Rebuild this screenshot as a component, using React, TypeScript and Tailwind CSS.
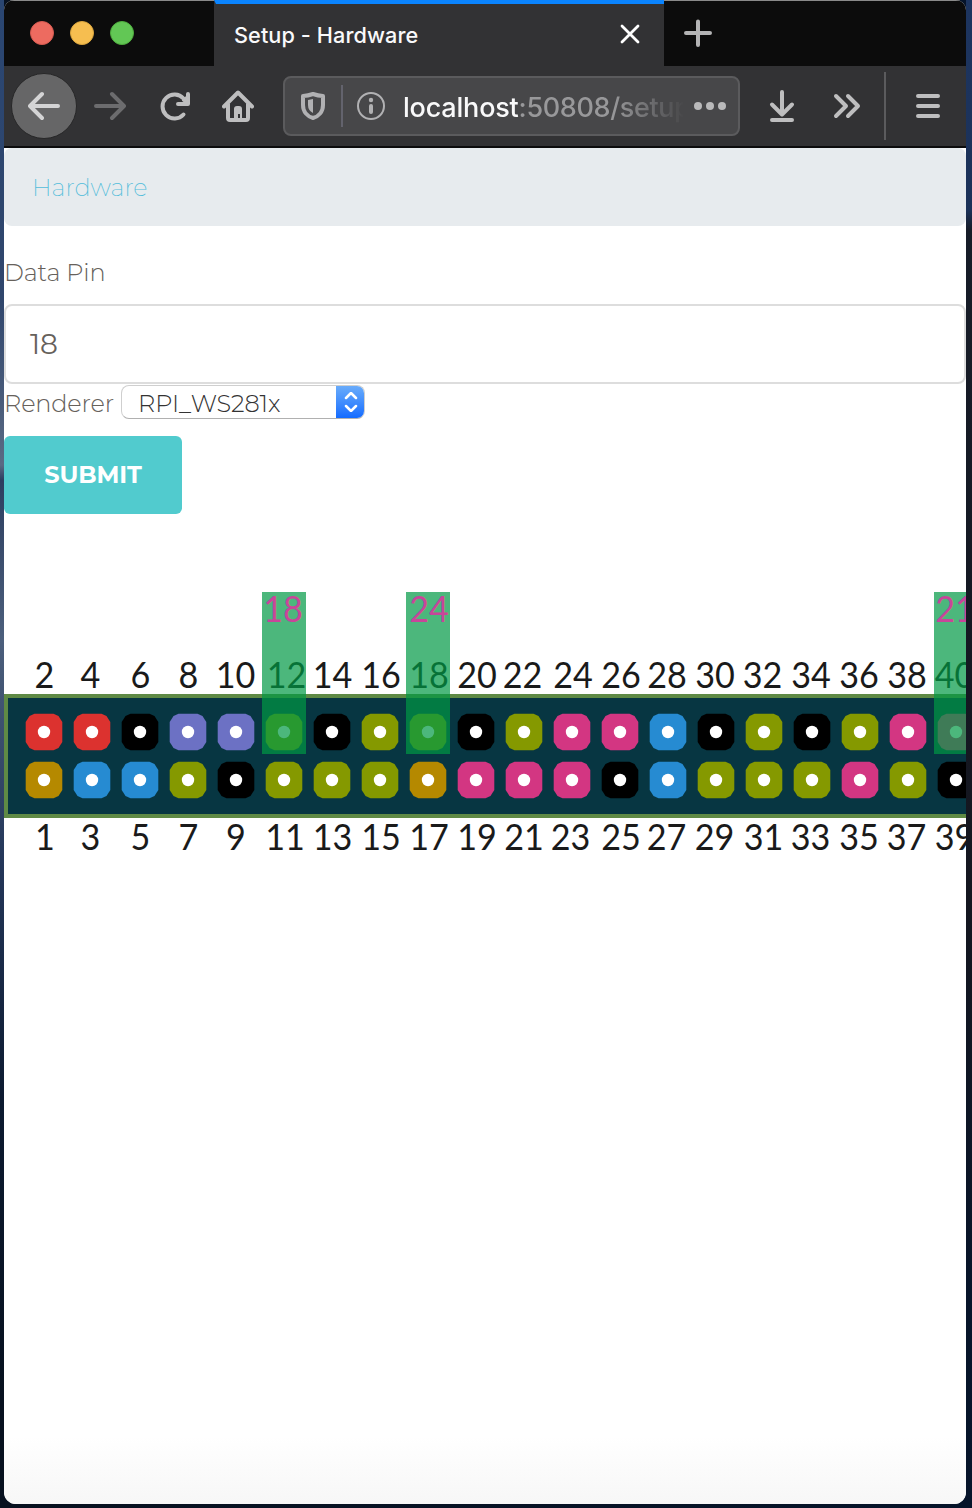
import React from 'react';

type Tone = 'red' | 'gold' | 'blue' | 'olive' | 'black' | 'violet' | 'pink';

const fills: Record<Tone, string> = {
  red: '#dc322f',
  gold: '#b58900',
  blue: '#268bd2',
  olive: '#859900',
  black: '#000000',
  violet: '#6c71c4',
  pink: '#d33682',
};

const top: Tone[] = ['red', 'red', 'black', 'violet', 'violet', 'olive', 'black', 'olive', 'olive', 'black', 'olive', 'pink', 'pink', 'blue', 'black', 'olive', 'black', 'olive', 'pink', 'pink'];
const bottom: Tone[] = ['gold', 'blue', 'blue', 'olive', 'black', 'olive', 'olive', 'olive', 'gold', 'pink', 'pink', 'pink', 'black', 'blue', 'olive', 'olive', 'olive', 'pink', 'olive', 'black'];

const topX = [40.5, 86.5, 136.5, 184.5, 231.5, 282.5, 328.5, 377, 425, 473, 518.5, 569, 617, 663, 711, 758.5, 807, 855, 903, 950.5];
const bottomX = [41, 86.5, 136.5, 184.5, 232, 281, 328.5, 377, 425, 473, 520, 566.5, 617, 662.5, 710.5, 759.5, 806.5, 855, 902.5, 950.5];

const highlights = [
  { x: 258, label: '18', cx: 279 },
  { x: 402, label: '24', cx: 425 },
  { x: 930, label: '21', cx: 951 },
];

function PinNumber({ x, y, value, fill = '#1a1a1a' }: { x: number; y: number; value: string; fill?: string }) {
  const length = value.length * 19.8;
  return (
    <text x={x - length / 2} y={y} fill={fill} fontSize="36.5" textLength={length} lengthAdjust="spacingAndGlyphs">
      {value}
    </text>
  );
}

function Pin({ cx, cy, tone }: { cx: number; cy: number; tone: Tone }) {
  return (
    <g transform={`translate(${cx} ${cy})`}>
      <path d="M-9.500-18.300H9.500L14.500-16 18.300-10V10L14.500 16 9.500 18.300H-9.500L-14.500 16-18.300 10V-10L-14.500-16Z" fill={fills[tone]} />
      <circle r="6.2" fill="#fff" />
    </g>
  );
}

function PinDiagram() {
  return (
    <svg className="mt-[78px] block h-[270px] w-[962px] shrink-0" viewBox="0 0 962 270" fontFamily="Lato, sans-serif" role="img" aria-label="GPIO pin header">
      <rect x="2" y="104" width="1000" height="120" fill="#073642" stroke="#5f8a45" strokeWidth="4" />
      {top.map((tone, i) => (
        <Pin key={i} cx={40 + i * 48} cy={140} tone={tone} />
      ))}
      {bottom.map((tone, i) => (
        <Pin key={i} cx={40 + i * 48} cy={188} tone={tone} />
      ))}
      {topX.map((x, i) => (
        <PinNumber key={i} x={x} y={96} value={String(i * 2 + 2)} />
      ))}
      {bottomX.map((x, i) => (
        <PinNumber key={i} x={x} y={258} value={String(i * 2 + 1)} />
      ))}
      {highlights.map((h) => (
        <g key={h.label}>
          <rect x={h.x} y="0" width="44" height="162" fill="#009944" fillOpacity="0.7" />
          <PinNumber x={h.cx} y={30} value={h.label} fill="#c8459a" />
        </g>
      ))}
    </svg>
  );
}

function TabStrip() {
  return (
    <div className="flex h-[66px] shrink-0 border-t border-[#8a8a8a] bg-[#0c0c0c]">
      <div className="flex w-[210px] items-center gap-4 pb-0.5 pl-[26px]">
        <span className="size-6 rounded-full border border-[#d65a50] bg-[#ed6b60]" />
        <span className="size-6 rounded-full border border-[#dca63d] bg-[#f6be50]" />
        <span className="size-6 rounded-full border border-[#4ead3d] bg-[#62c755]" />
      </div>
      <div className="-mt-px flex h-[66px] w-[450px] items-center border-t-4 border-l-2 border-t-[#0a84ff] border-l-[#323234] bg-[#323234] pl-[18px] text-[21.7px] font-medium text-[#f9f9fa]">
        <span className="tracking-[0.08px]">Setup - Hardware</span>
        <svg className="mr-[22px] mb-0.5 ml-auto size-6" viewBox="0 0 24 24" stroke="#fff" strokeWidth="2.8" strokeLinecap="round">
          <path d="M4 4 20 20M20 4 4 20" />
        </svg>
      </div>
      <svg className="mt-[17px] ml-[18px] size-8" viewBox="0 0 32 32" stroke="#b4b4b5" strokeWidth="4" strokeLinecap="round">
        <path d="M16 3.5V27M4 15H28" />
      </svg>
    </div>
  );
}

function Toolbar() {
  return (
    <div className="flex h-[82px] shrink-0 items-center border-b-2 border-[#0c0c0d] bg-[#323234]">
      <span className="ml-[7px] flex size-[66px] items-center justify-center rounded-full border border-[#272728] bg-[#666667]">
        <svg className="size-8" viewBox="0 0 32 32" fill="none" stroke="#d4d4d5" strokeWidth="4" strokeLinecap="round" strokeLinejoin="round">
          <path d="M30 16H3M14 4 2 16l12 12" />
        </svg>
      </span>
      <svg className="ml-[17px] size-8" viewBox="0 0 32 32" fill="none" stroke="#6c6c6e" strokeWidth="4" strokeLinecap="round" strokeLinejoin="round">
        <path d="M2 16h27M18 4l12 12-12 12" />
      </svg>
      <svg className="ml-8 size-8" viewBox="0 0 32 32" fill="none" stroke="#bebebf" strokeWidth="4" strokeLinecap="round" strokeLinejoin="round">
        <path d="M25.500 24.500A12 12 0 1 1 25.500 8.500L28.500 12M30 4V14H20" />
        <path d="M25 10.500 28.500 7v5.500Z" fill="#bebebf" strokeWidth="2" />
      </svg>
      <svg className="ml-8 size-8" viewBox="0 0 32 32" fill="none" stroke="#bebebf" strokeWidth="4" strokeLinecap="round" strokeLinejoin="round">
        <path d="M2 16.500 16 2.500l14 14M6 14v14q0 2 2 2h16q2 0 2-2V14" />
        <path d="M12 30v-11q0-3 3-3h2q3 0 3 3v11h-2v-6h-2v6Z" fill="#bebebf" stroke="none" />
      </svg>
      <div className="ml-[29px] flex h-[60px] w-[457px] items-center rounded-lg border-2 border-[#5b5b5d] bg-[#474749]">
        <svg className="ml-4 h-7 w-6" viewBox="0 0 24 28">
          <path d="M2 4Q7 3.800 12 2q5 1.800 10 2v9c0 7-4.500 11.500-10 13C6.500 24.500 2 20 2 13Z" fill="none" stroke="#b1b1b3" strokeWidth="4" strokeLinejoin="round" />
          <path d="M12 7v14Q7 18.500 7 13V8Z" fill="#b1b1b3" />
        </svg>
        <span className="ml-4 h-[42px] w-0.5 bg-[#63636d]" />
        <svg className="ml-3.5 size-7" viewBox="0 0 28 28">
          <circle cx="14" cy="14" r="13" fill="none" stroke="#b1b1b3" strokeWidth="2" />
          <circle cx="14" cy="8" r="2.200" fill="#b1b1b3" />
          <path d="M14 14v6" stroke="#b1b1b3" strokeWidth="4" strokeLinecap="round" />
        </svg>
        <span className="mt-[4px] ml-[18px] w-[280px] overflow-hidden text-[27px] font-medium tracking-[-0.35px] whitespace-nowrap text-[#98989a] [mask-image:linear-gradient(to_right,black_210px,transparent_282px)]">
          <span className="tracking-[-0.2px] text-[#f9f9fa]">localhost</span>:50808/setup
        </span>
        <svg className="ml-[10px] h-8 w-[34px] shrink-0" viewBox="0 0 34 32" fill="#b9b9ba">
          <circle cx="5" cy="16" r="4" />
          <circle cx="17" cy="16" r="4" />
          <circle cx="29" cy="16" r="4" />
        </svg>
      </div>
      <svg className="ml-[26px] size-8" viewBox="0 0 32 32" fill="none" stroke="#bebebf" strokeWidth="4" strokeLinecap="round" strokeLinejoin="round">
        <path d="M16 2v22M6 14.500l10 10 10-10M6 30h20" />
      </svg>
      <svg className="ml-[33px] size-8" viewBox="0 0 32 32" fill="none" stroke="#bebebf" strokeWidth="4" strokeLinecap="round" strokeLinejoin="round">
        <path d="M5 6l10 10L5 26M17 6l10 10-10 10" />
      </svg>
      <span className="ml-[21px] h-[68px] w-0.5 bg-[#5b5b5d]" />
      <svg className="ml-[26px] size-8" viewBox="0 0 32 32" stroke="#bebebf" strokeWidth="4" strokeLinecap="round">
        <path d="M6 6h20M6 16h20M6 26h20" />
      </svg>
    </div>
  );
}

function SetupForm() {
  return (
    <div className="flex flex-col items-start text-2xl leading-8 font-light text-[#66615b]">
      <label className="mt-[31px] tracking-[-0.15px]">Data Pin</label>
      <div className="mt-[15px] flex h-20 w-full items-center rounded-lg border-2 border-[#dddddd] pl-6 text-[28px] font-normal">18</div>
      <div className="mt-px flex h-[34px] items-center">
        <span className="mt-1 w-[117px] tracking-[-0.15px]">Renderer</span>
        <div className="flex h-[34px] w-[244px] items-center overflow-hidden rounded-lg border border-[#cfcfcf] border-b-[#b0b0b0] text-[#333]">
          <span className="mt-1 ml-4 w-[198px] tracking-[-0.1px]">RPI_WS281x</span>
          <span className="-mr-px flex h-[35px] flex-1 items-center justify-center bg-linear-to-b from-[#6badfa] to-[#0a66ff]">
            <svg className="h-5 w-3.5" viewBox="0 0 14 20" fill="none" stroke="#fff" strokeWidth="2.500" strokeLinecap="round" strokeLinejoin="round">
              <path d="M2 6l5-5 5 5M2 14l5 5 5-5" />
            </svg>
          </span>
        </div>
      </div>
      <button className="mt-[17px] h-[78px] w-[178px] rounded-md bg-[#51cbce] text-2xl font-bold tracking-[-0.1px] text-white">SUBMIT</button>
    </div>
  );
}

export default function App() {
  return (
    <div className="flex h-[1508px] w-[972px] bg-linear-to-r from-[#07111f] to-[#06142a] font-[Inter,sans-serif]">
      <div className="w-1 shrink-0 bg-[linear-gradient(to_bottom,#2a4672_0px,#30466c_300px,#5a6a84_465px,#2c3e60_480px,#4c5f7c_640px,#24375a_860px,#0c1a30_1100px,#07111f_1400px)]" />
      <div className="flex h-[1504px] w-[962px] shrink-0 flex-col overflow-hidden rounded-t-[10px] rounded-b-[12px] bg-white">
        <TabStrip />
        <Toolbar />
        <main className="flex flex-1 flex-col bg-linear-to-b from-white from-95% to-[#f7f7f7] font-[Montserrat,Inter,sans-serif]">
          <nav className="flex h-[78px] w-full shrink-0 items-center rounded-lg bg-[#e7ebee] pt-0.5 pl-[28px] text-2xl font-extralight text-[#51bcda]">Hardware</nav>
          <SetupForm />
          <PinDiagram />
        </main>
      </div>
      <div className="w-1.5 shrink-0 bg-[linear-gradient(to_bottom,#1d3560_0px,#1b3158_210px,#161c28_230px,#14161f_900px,#07152a_1300px,#06142a_1508px)]" />
    </div>
  );
}
